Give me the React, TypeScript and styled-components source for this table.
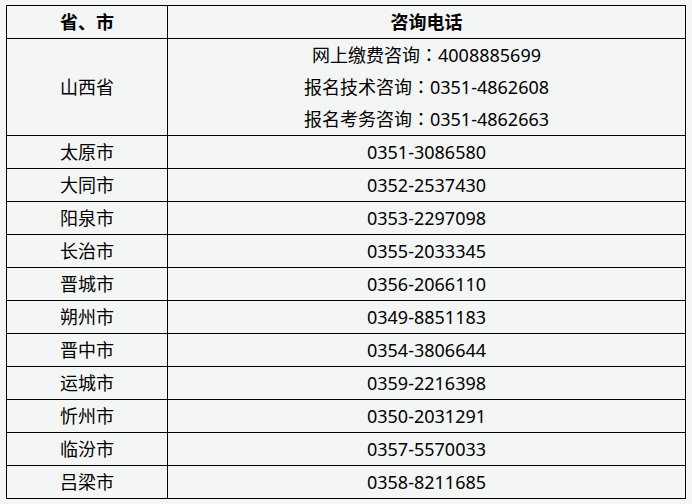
import React from "react";
import styled, { createGlobalStyle } from "styled-components";

const GlobalStyle = createGlobalStyle`
  html, body {
    margin: 0;
    padding: 0;
    background: #f4f6f5;
  }
  body {
    font-family: "Noto Sans", "Noto Sans CJK SC", sans-serif;
    color: #000;
  }
`;

const cities: [string, string][] = [
  ["太原市", "0351-3086580"],
  ["大同市", "0352-2537430"],
  ["阳泉市", "0353-2297098"],
  ["长治市", "0355-2033345"],
  ["晋城市", "0356-2066110"],
  ["朔州市", "0349-8851183"],
  ["晋中市", "0354-3806644"],
  ["运城市", "0359-2216398"],
  ["忻州市", "0350-2031291"],
  ["临汾市", "0357-5570033"],
  ["吕梁市", "0358-8211685"],
];

const provinceLines: [string, string][] = [
  ["网上缴费咨询", "4008885699"],
  ["报名技术咨询", "0351-4862608"],
  ["报名考务咨询", "0351-4862663"],
];

const App = () => {
  return (
    <>
      <GlobalStyle />
      <Page>
        <Table>
          <colgroup>
            <col style={{ width: 161 }} />
            <col />
          </colgroup>
          <thead>
            <tr>
              <HeadCell>省、市</HeadCell>
              <HeadCell>咨询电话</HeadCell>
            </tr>
          </thead>
          <tbody>
            <tr>
              <Cell>山西省</Cell>
              <Cell>
                {provinceLines.map(([label, phone]) => (
                  <Line key={label}>
                    {label}
                    <Colon>：</Colon>
                    {phone}
                  </Line>
                ))}
              </Cell>
            </tr>
            {cities.map(([name, phone]) => (
              <tr key={name}>
                <Cell>{name}</Cell>
                <Cell>{phone}</Cell>
              </tr>
            ))}
          </tbody>
        </Table>
      </Page>
    </>
  );
};

export default App;

const Page = styled.div`
  padding: 5px 0 0 6px;
`;

const Table = styled.table`
  width: 680px;
  border-collapse: collapse;
  table-layout: fixed;
  font-size: 18px;
`;

const HeadCell = styled.th`
  border: 1px solid #000;
  height: 32px;
  padding: 0;
  line-height: 32px;
  font-weight: bold;
  text-align: center;
`;

const Cell = styled.td`
  border: 1px solid #000;
  height: 32px;
  padding: 0;
  line-height: 32px;
  text-align: center;
  vertical-align: middle;
`;

const Line = styled.div`
  height: 32px;
  line-height: 32px;
`;

/* full-width colon sits centred in its box, as in the TC face */
const Colon = styled.span`
  font-family: "Noto Sans CJK TC", sans-serif;
  line-height: 1;
`;
